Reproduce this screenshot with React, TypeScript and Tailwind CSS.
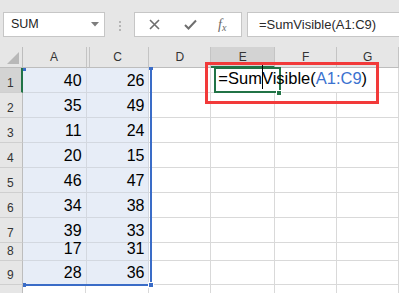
import React from "react";

const F = { fontFamily: '"Liberation Sans", Arial, sans-serif' };

type Col = { key: string; w: number };
const cols: Col[] = [
  { key: "A", w: 65 },
  { key: "C", w: 64 },
  { key: "D", w: 63 },
  { key: "E", w: 65 },
  { key: "F", w: 63 },
  { key: "G", w: 63 },
];

const rows = [
  { n: 1, h: 25, a: "40", c: "26" },
  { n: 2, h: 25, a: "35", c: "49" },
  { n: 3, h: 25, a: "11", c: "24" },
  { n: 4, h: 25, a: "20", c: "15" },
  { n: 5, h: 25, a: "46", c: "47" },
  { n: 6, h: 25, a: "34", c: "38" },
  { n: 7, h: 25, a: "39", c: "33" },
  { n: 8, h: 18, a: "17", c: "31" },
  { n: 9, h: 24, a: "28", c: "36" },
];

function Formula() {
  return (
    <span className="whitespace-nowrap text-[16.5px] leading-none text-black">
      =Sum
      <span className="relative inline-block h-0 w-0">
        <span className="absolute left-0 bottom-[-5px] h-[25px] w-px bg-black" />
      </span>
      Visible(<span className="text-[#3a72d0]">A1:C9</span>)
    </span>
  );
}

export default function App() {
  return (
    <div className="relative w-[399px] h-[293px] overflow-hidden bg-white" style={F}>
      {/* Toolbar */}
      <div className="h-[47px] bg-[#e6e6e6] flex items-start pt-[12px]">
        <div className="ml-[3px] w-[102px] h-[25px] bg-white border border-[#c6c6c6] flex items-center justify-between pl-[7px] pr-[5px]">
          <span className="text-[12.5px] text-[#222] leading-none">SUM</span>
          <svg width="8" height="5" viewBox="0 0 8 5">
            <path d="M0 0 L8 0 L4 4.5 Z" fill="#7d7d7d" />
          </svg>
        </div>
        <div className="ml-[14px] mt-[9px] flex flex-col gap-[2px]">
          <span className="block w-[2px] h-[2px] bg-[#b5b5b5]" />
          <span className="block w-[2px] h-[2px] bg-[#b5b5b5]" />
          <span className="block w-[2px] h-[2px] bg-[#b5b5b5]" />
        </div>
        <div className="ml-[13px] w-[108px] h-[25px] bg-white border border-[#c6c6c6] flex items-center">
          <svg className="ml-[14px]" width="11" height="11" viewBox="0 0 11 11">
            <path d="M1 1 L10 10 M10 1 L1 10" stroke="#6e6e6e" strokeWidth="1.6" />
          </svg>
          <svg className="ml-[24px]" width="13" height="11" viewBox="0 0 13 11">
            <path d="M1 6 L4.5 9.5 L12 1.5" stroke="#6e6e6e" strokeWidth="2" fill="none" />
          </svg>
          <span
            className="ml-[21px] italic text-[14px] text-[#6a6a6a] leading-none"
            style={{ fontFamily: '"Liberation Serif", serif' }}
          >
            f<span className="text-[10px] relative top-[2px]">x</span>
          </span>
        </div>
        <div className="ml-[5px] flex-1 h-[25px] bg-white border border-[#c6c6c6] border-r-0 flex items-center pl-[11px]">
          <span className="text-[13px] text-[#2a2a2a] leading-none whitespace-nowrap">=SumVisible(A1:C9)</span>
        </div>
      </div>

      {/* Grid */}
      <div className="flex flex-col">
        {/* Header row */}
        <div className="flex h-[21px]">
          <div className="w-[23px] h-full box-border border-r border-b border-[#bdbdbd] bg-[#e6e6e6] flex items-end justify-end pr-[3px] pb-[3px]">
            <svg width="12" height="12" viewBox="0 0 12 12">
              <path d="M12 0 L12 12 L0 12 Z" fill="#b8b8b8" />
            </svg>
          </div>
          {cols.map((c) => (
            <div
              key={c.key}
              style={{ width: c.w }}
              className={`relative h-full box-border border-r border-[#c4c4c4] flex items-center justify-center text-[12px] leading-none text-[#333] ${
                c.key === "E"
                  ? "bg-[#d3d3d3] border-b-2 border-b-[#217346]"
                  : "bg-[#e6e6e6] border-b border-b-[#bdbdbd]"
              }`}
            >
              {c.key === "C" && <span className="absolute left-[2px] top-0 bottom-0 w-px bg-[#c4c4c4]" />}
              {c.key}
            </div>
          ))}
        </div>

        {rows.map((r) => (
          <div key={r.n} className="flex" style={{ height: r.h }}>
            <div
              className={`w-[23px] h-full box-border border-b border-[#cfcfcf] flex items-end pl-[7px] pb-[3px] text-[12px] leading-none text-[#333] ${
                r.n === 1 ? "bg-[#d3d3d3] border-r-2 border-r-[#217346]" : "bg-[#e6e6e6] border-r border-r-[#bdbdbd]"
              }`}
            >
              {r.n}
            </div>
            {cols.map((c) => {
              const sel = c.key === "A" || c.key === "C";
              const val = c.key === "A" ? r.a : c.key === "C" ? r.c : "";
              const noRight = r.n === 1 && (c.key === "E" || c.key === "F");
              return (
                <div
                  key={c.key}
                  style={{ width: c.w }}
                  className={`relative h-full box-border border-b flex items-end justify-end pr-[4px] pb-[3px] text-[16px] leading-none text-black ${
                    sel ? "bg-[#e7edf7] border-[#d3d8e0]" : "bg-white border-[#d9d9d9]"
                  } ${noRight ? "border-r-0 pr-[5px]" : "border-r"}`}
                >
                  {val}
                  {r.n === 1 && c.key === "E" && (
                    <div className="absolute left-[7px] bottom-[5px] z-30">
                      <Formula />
                    </div>
                  )}
                </div>
              );
            })}
          </div>
        ))}
        <div className="flex h-[10px]">
          <div className="w-[23px] h-full box-border border-r border-[#bdbdbd] bg-[#e6e6e6]" />
          {cols.map((c) => (
            <div key={c.key} style={{ width: c.w }} className="h-full box-border border-r border-[#d9d9d9]" />
          ))}
        </div>
      </div>

      {/* Range highlight (blue) */}
      <div className="absolute left-[150px] top-[68px] w-[2px] h-[218px] bg-[#3a6cc7]" />
      <div className="absolute left-[23px] top-[284px] w-[129px] h-[2px] bg-[#3a6cc7]" />
      <div className="absolute left-[23px] top-[68px] w-[3px] h-[3px] bg-[#3a6cc7]" />
      <div className="absolute left-[149px] top-[67px] w-[4px] h-[3px] bg-[#3a6cc7]" />
      <div className="absolute left-[23px] top-[283px] w-[3px] h-[4px] bg-[#3a6cc7]" />
      <div className="absolute left-[148px] top-[282px] w-[6px] h-[6px] bg-[#3a6cc7] border border-white" />

      {/* Active cell */}
      <div className="absolute left-[214px] top-[67px] w-[67px] h-[26px] border-2 border-[#217346] z-20 pointer-events-none" />
      <div className="absolute left-[276px] top-[90px] w-[6px] h-[6px] bg-[#217346] border border-white z-20" />

      {/* Red annotation box */}
      <div className="absolute left-[205px] top-[62px] w-[174px] h-[42px] border-[3px] border-[#f23a3a] z-40" />
    </div>
  );
}
